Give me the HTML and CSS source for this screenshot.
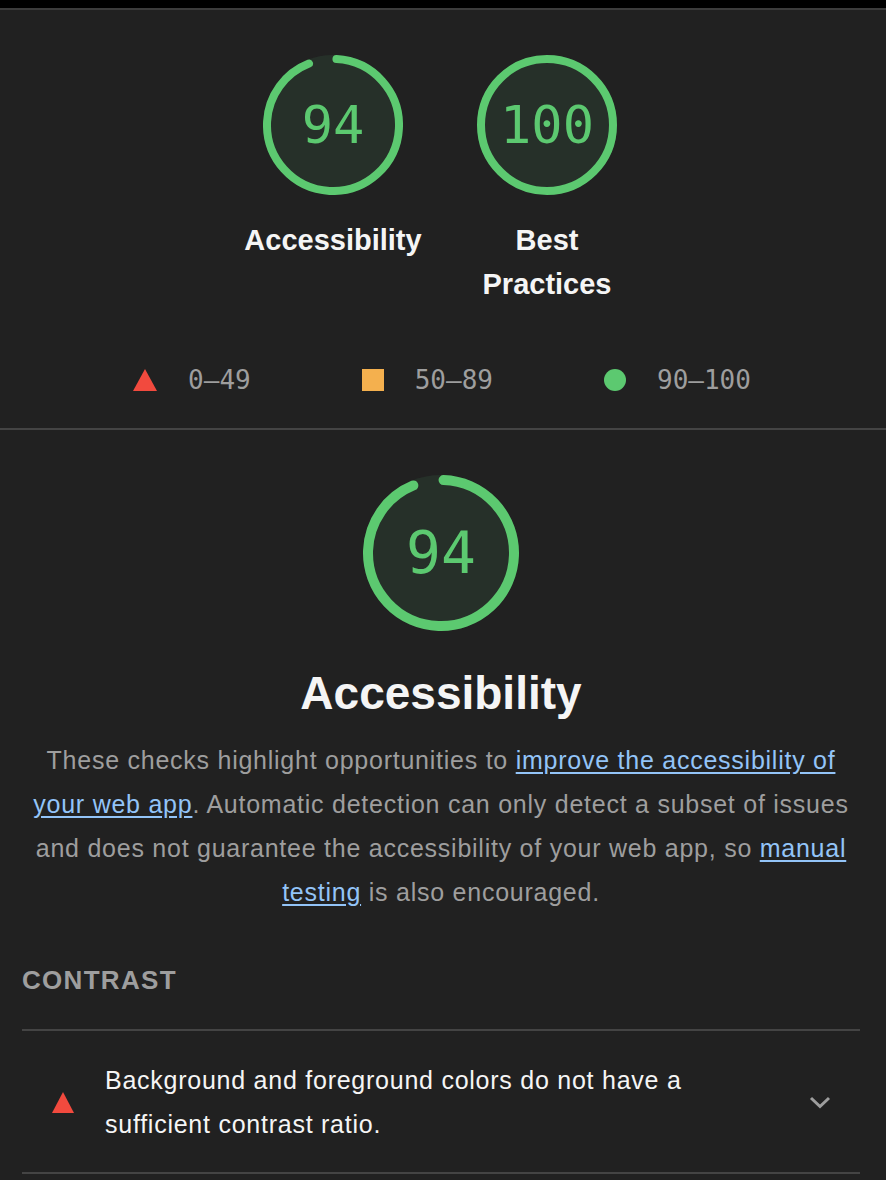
FILE: index.html
```html
<!DOCTYPE html>
<html lang="en">
<head>
<meta charset="utf-8">
<title>Lighthouse Report</title>
<link rel="stylesheet" href="styles.css">
</head>
<body>
<div class="topbar"></div>

<section class="summary">
  <div class="gauges">
    <div class="gauge-wrap">
      <div class="gauge gauge--sm">
        <svg viewBox="0 0 140 140" width="140" height="140">
          <circle class="gauge-base" cx="70" cy="70" r="70"></circle>
          <circle class="gauge-arc" cx="70" cy="70" r="66" stroke-width="8" stroke-dasharray="386 1000" transform="rotate(-87 70 70)"></circle>
        </svg>
        <span class="gauge-value">94</span>
      </div>
      <div class="gauge-label">Accessibility</div>
    </div>
    <div class="gauge-wrap">
      <div class="gauge gauge--sm">
        <svg viewBox="0 0 140 140" width="140" height="140">
          <circle class="gauge-base" cx="70" cy="70" r="70"></circle>
          <circle class="gauge-arc" cx="70" cy="70" r="66" stroke-width="8"></circle>
        </svg>
        <span class="gauge-value">100</span>
      </div>
      <div class="gauge-label">Best Practices</div>
    </div>
  </div>

  <div class="legend">
    <div class="legend-item">
      <svg class="legend-icon" width="24" height="22" viewBox="0 0 24 22"><polygon points="12,0 24,22 0,22" fill="#f24a3e"></polygon></svg>
      <span>0–49</span>
    </div>
    <div class="legend-item">
      <span class="legend-square"></span>
      <span>50–89</span>
    </div>
    <div class="legend-item">
      <span class="legend-circle"></span>
      <span>90–100</span>
    </div>
  </div>
</section>

<section class="category">
  <div class="gauge gauge--lg">
    <svg viewBox="0 0 156 156" width="156" height="156">
      <circle class="gauge-base" cx="78" cy="78" r="78"></circle>
      <circle class="gauge-arc" cx="78" cy="78" r="73" stroke-width="10" stroke-dasharray="427 1000" transform="rotate(-88 78 78)"></circle>
    </svg>
    <span class="gauge-value">94</span>
  </div>
  <h1 class="category-title">Accessibility</h1>
  <p class="category-desc">These checks highlight opportunities to <a href="#">improve the accessibility of your web app</a>. Automatic detection can only detect a subset of issues and does not guarantee the accessibility of your web app, so <a href="#">manual testing</a> is also encouraged.</p>

  <div class="group">
    <div class="group-title">Contrast</div>
    <div class="audit">
      <svg class="audit-icon" width="22" height="21" viewBox="0 0 22 21"><polygon points="11,0 22,21 0,21" fill="#f24a3e"></polygon></svg>
      <div class="audit-text">Background and foreground colors do not have a sufficient contrast ratio.</div>
      <svg class="chevron" width="22" height="13" viewBox="0 0 22 13"><polyline points="2,2 11,10.5 20,2" fill="none" stroke="#9e9e9e" stroke-width="3"></polyline></svg>
    </div>
  </div>
</section>
</body>
</html>
```

FILE: styles.css
```css
html, body {
  margin: 0;
  padding: 0;
  background: #212121;
}

body {
  font-family: "Liberation Sans", Arial, sans-serif;
  color: #f5f5f5;
}

.topbar {
  height: 8px;
  background: #000;
  border-bottom: 2px solid #3c3c3c;
}

.summary {
  padding: 45px 0 26px;
  border-bottom: 2px solid #444;
}

.gauges {
  display: flex;
  justify-content: center;
  gap: 28px;
  padding-right: 6px;
}

.gauge-wrap {
  width: 186px;
  display: flex;
  flex-direction: column;
  align-items: center;
}

.gauge {
  position: relative;
  display: flex;
  align-items: center;
  justify-content: center;
}

.gauge svg {
  display: block;
}

.gauge-base {
  fill: #263029;
}

.gauge-arc {
  fill: none;
  stroke: #5cc970;
  stroke-linecap: round;
}

.gauge-value {
  position: absolute;
  left: 0;
  right: 0;
  top: 50%;
  transform: translateY(-50%);
  text-align: center;
  font-family: "DejaVu Sans Mono", "Liberation Mono", monospace;
  color: #5cc970;
  line-height: 1;
}

.gauge--sm .gauge-value {
  font-size: 52px;
}

.gauge--lg .gauge-value {
  font-size: 58px;
}

.gauge-label {
  margin-top: 23px;
  font-size: 29px;
  font-weight: 700;
  line-height: 44px;
  text-align: center;
  color: #f5f5f5;
}

.legend {
  margin-top: 52px;
  display: flex;
  justify-content: center;
  gap: 111px;
  padding-right: 2px;
  font-family: "DejaVu Sans Mono", "Liberation Mono", monospace;
  font-size: 26px;
  line-height: 44px;
  color: #9e9e9e;
}

.legend-item {
  display: flex;
  align-items: center;
  gap: 31px;
}

.legend-icon {
  display: block;
}

.legend-square {
  width: 22px;
  height: 22px;
  background: #f4b04e;
}

.legend-circle {
  width: 22px;
  height: 22px;
  border-radius: 50%;
  background: #5cc970;
}

.category {
  padding: 45px 26px 0 22px;
  display: flex;
  flex-direction: column;
  align-items: center;
}

.category-title {
  margin: 34px 0 0;
  font-size: 46px;
  font-weight: 700;
  line-height: 56px;
  color: #f5f5f5;
}

.category-desc {
  margin: 17px 0 0;
  font-size: 25px;
  line-height: 44px;
  letter-spacing: 0.75px;
  text-align: center;
  color: #9e9e9e;
}

.category-desc a {
  color: #93c4f8;
  text-decoration: underline;
  text-underline-offset: 3px;
}

.group {
  align-self: stretch;
  margin-top: 44px;
}

.group-title {
  font-size: 26px;
  font-weight: 700;
  line-height: 44px;
  letter-spacing: 1.3px;
  text-transform: uppercase;
  color: #9e9e9e;
  padding-bottom: 27px;
  border-bottom: 2px solid #444;
}

.audit {
  display: flex;
  align-items: center;
  padding: 27px 0 26px;
  border-bottom: 2px solid #444;
}

.audit-icon {
  display: block;
  margin-left: 30px;
  flex: none;
}

.audit-text {
  flex: 1;
  margin-left: 31px;
  margin-right: 40px;
  font-size: 25px;
  line-height: 44px;
  letter-spacing: 0.75px;
  color: #f5f5f5;
}

.chevron {
  display: block;
  flex: none;
  margin-right: 29px;
}
```
